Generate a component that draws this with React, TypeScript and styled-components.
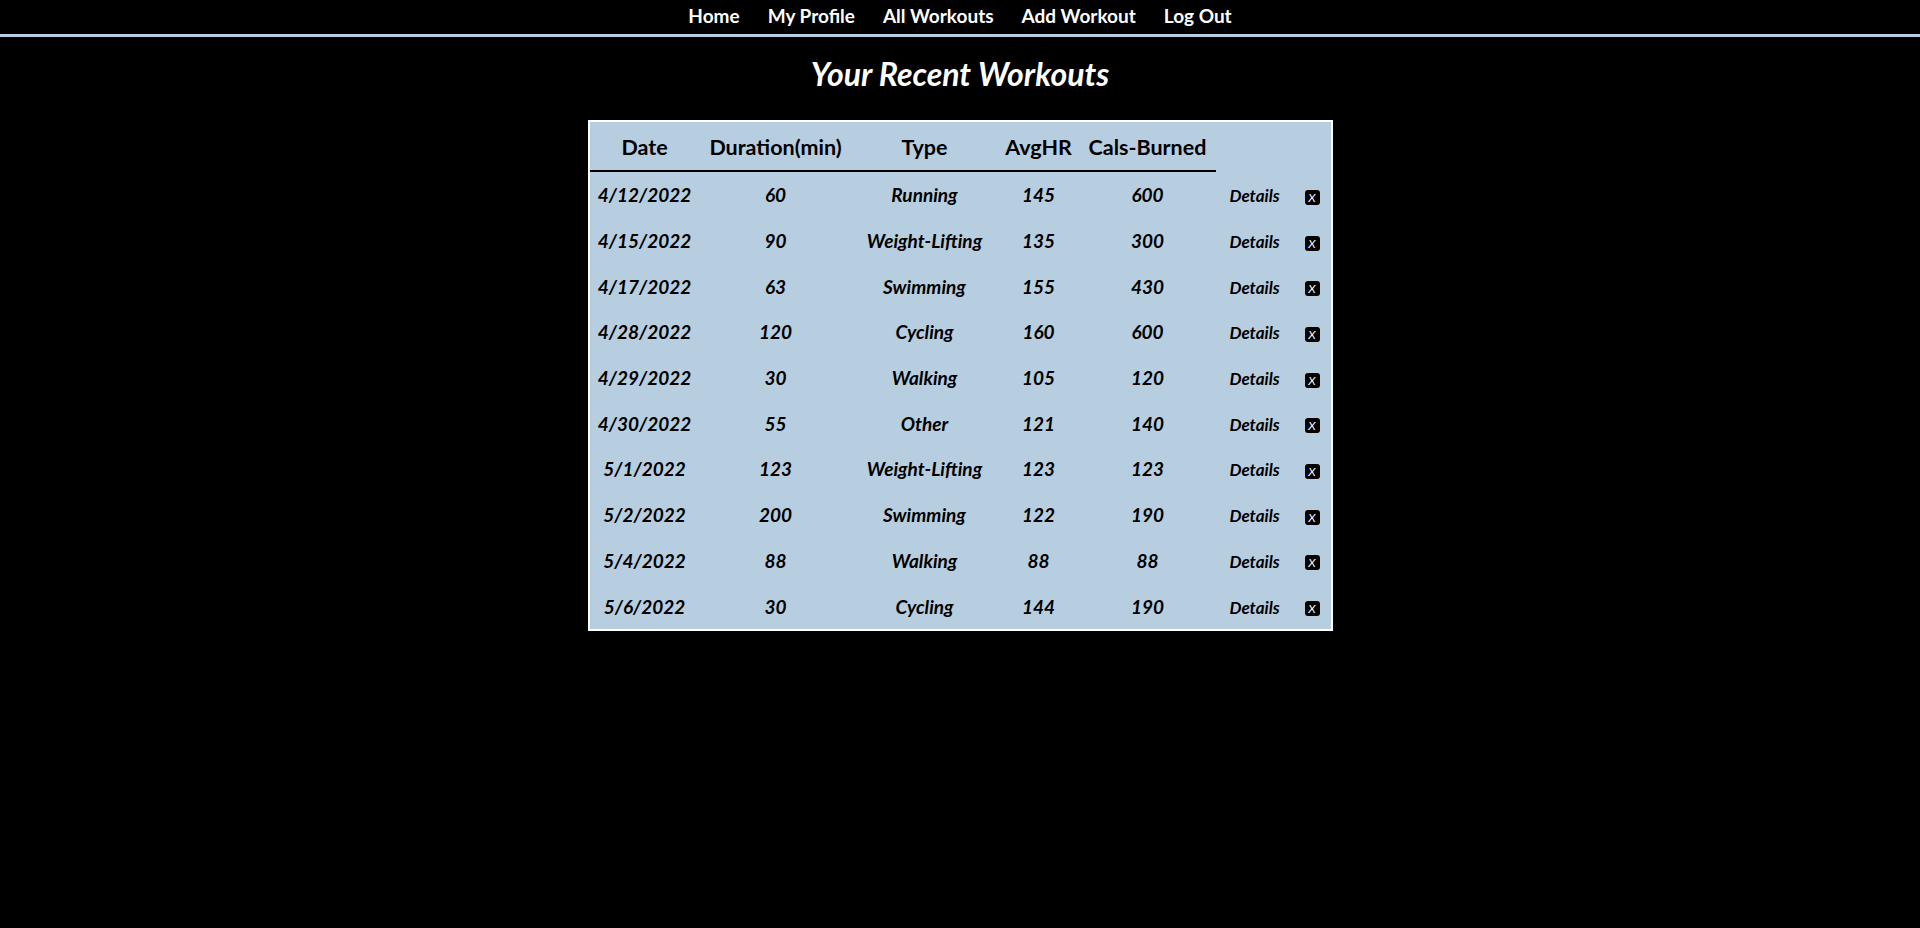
import React from "react";
import styled, {createGlobalStyle} from "styled-components";

type Workout = {
  date: string;
  duration: number;
  type: string;
  avgHR: number;
  cals: number;
};

const workouts: Workout[] = [
  {date: "4/12/2022", duration: 60, type: "Running", avgHR: 145, cals: 600},
  {date: "4/15/2022", duration: 90, type: "Weight-Lifting", avgHR: 135, cals: 300},
  {date: "4/17/2022", duration: 63, type: "Swimming", avgHR: 155, cals: 430},
  {date: "4/28/2022", duration: 120, type: "Cycling", avgHR: 160, cals: 600},
  {date: "4/29/2022", duration: 30, type: "Walking", avgHR: 105, cals: 120},
  {date: "4/30/2022", duration: 55, type: "Other", avgHR: 121, cals: 140},
  {date: "5/1/2022", duration: 123, type: "Weight-Lifting", avgHR: 123, cals: 123},
  {date: "5/2/2022", duration: 200, type: "Swimming", avgHR: 122, cals: 190},
  {date: "5/4/2022", duration: 88, type: "Walking", avgHR: 88, cals: 88},
  {date: "5/6/2022", duration: 30, type: "Cycling", avgHR: 144, cals: 190},
];

const columnWidths = [110, 152, 146, 82, 136, 78, 37];
const headers = ["Date", "Duration(min)", "Type", "AvgHR", "Cals-Burned"];

const ACCENT = "#b7cee1";

const GlobalStyle = createGlobalStyle`
  html, body {
    margin: 0;
    padding: 0;
    background: #000;
  }

  body {
    min-height: 100vh;
    font-family: Lato, "Open Sans", sans-serif;
  }
`;

export default function App() {
  return (
    <>
      <GlobalStyle />
      <Page>
        <Nav>
          <NavLink href="#">Home</NavLink>
          <NavLink href="#">My Profile</NavLink>
          <NavLink href="#">All Workouts</NavLink>
          <NavLink href="#">Add Workout</NavLink>
          <NavLink href="#">Log Out</NavLink>
        </Nav>

        <Title>Your Recent Workouts</Title>

        <Table>
          <colgroup>
            {columnWidths.map((w, i) => (
              <col key={i} style={{width: w}} />
            ))}
          </colgroup>
          <thead>
            <tr>
              {headers.map((h) => (
                <HeadCell key={h}>{h}</HeadCell>
              ))}
              <EmptyHead />
              <EmptyHead />
            </tr>
          </thead>
          <tbody>
            {workouts.map((w) => (
              <tr key={w.date}>
                <Cell>{w.date}</Cell>
                <Cell>{w.duration}</Cell>
                <Cell>{w.type}</Cell>
                <Cell>{w.avgHR}</Cell>
                <Cell>{w.cals}</Cell>
                <Cell>
                  <DetailsButton>Details</DetailsButton>
                </Cell>
                <Cell>
                  <DeleteButton>X</DeleteButton>
                </Cell>
              </tr>
            ))}
          </tbody>
        </Table>
      </Page>
    </>
  );
}

const Page = styled.div`
  display: flex;
  flex-direction: column;
  align-items: center;
  width: 100%;
  color: #fff;
`;

const Nav = styled.nav`
  display: flex;
  justify-content: center;
  align-items: center;
  gap: 28px;
  width: 100%;
  height: 34px;
  border-bottom: 3px solid ${ACCENT};
`;

const NavLink = styled.a`
  color: #fff;
  text-decoration: none;
  font-weight: 700;
  font-size: 19px;
  line-height: 1;
  padding-bottom: 3px;
`;

const Title = styled.h1`
  margin: 17px 0 26px;
  font-size: 32px;
  line-height: 40px;
  font-weight: 700;
  font-style: italic;
  color: #fff;
`;

const Table = styled.table`
  width: 745px;
  table-layout: fixed;
  border: 2px solid #fff;
  border-collapse: separate;
  border-spacing: 0;
  background: ${ACCENT};
  color: #000;
`;

const HeadCell = styled.th`
  height: 46px;
  padding: 2px 0 0;
  font-size: 21.5px;
  font-weight: 700;
  text-align: center;
  border-bottom: 2px solid #000;
`;

const EmptyHead = styled.th`
  padding: 0;
`;

const Cell = styled.td`
  height: 45.7px;
  padding: 0;
  text-align: center;
  font-size: 19px;
  font-weight: 700;
  font-style: italic;
`;

const DetailsButton = styled.button`
  background: transparent;
  border: none;
  padding: 0;
  font-family: inherit;
  font-size: 17px;
  font-weight: 700;
  font-style: italic;
  color: #000;
  cursor: pointer;
`;

const DeleteButton = styled.button`
  display: inline-flex;
  align-items: center;
  justify-content: center;
  width: 15px;
  height: 15px;
  padding: 0;
  border: none;
  border-radius: 3px;
  background: #000;
  color: #fff;
  font-family: inherit;
  font-size: 12px;
  font-style: italic;
  cursor: pointer;
  vertical-align: middle;
`;
